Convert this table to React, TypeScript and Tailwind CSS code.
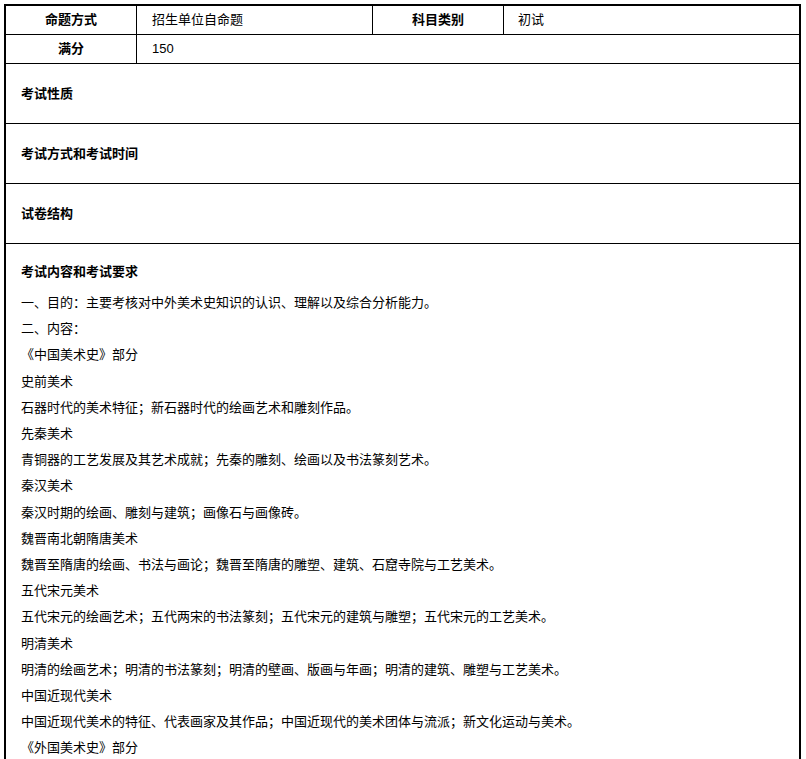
const lines = [
  "一、目的：主要考核对中外美术史知识的认识、理解以及综合分析能力。",
  "二、内容：",
  "《中国美术史》部分",
  "史前美术",
  "石器时代的美术特征；新石器时代的绘画艺术和雕刻作品。",
  "先秦美术",
  "青铜器的工艺发展及其艺术成就；先秦的雕刻、绘画以及书法篆刻艺术。",
  "秦汉美术",
  "秦汉时期的绘画、雕刻与建筑；画像石与画像砖。",
  "魏晋南北朝隋唐美术",
  "魏晋至隋唐的绘画、书法与画论；魏晋至隋唐的雕塑、建筑、石窟寺院与工艺美术。",
  "五代宋元美术",
  "五代宋元的绘画艺术；五代两宋的书法篆刻；五代宋元的建筑与雕塑；五代宋元的工艺美术。",
  "明清美术",
  "明清的绘画艺术；明清的书法篆刻；明清的壁画、版画与年画；明清的建筑、雕塑与工艺美术。",
  "中国近现代美术",
  "中国近现代美术的特征、代表画家及其作品；中国近现代的美术团体与流派；新文化运动与美术。",
  "《外国美术史》部分",
];

const sections = ["考试性质", "考试方式和考试时间", "试卷结构"];

export default function App() {
  return (
    <div className="bg-white p-1 text-[13px] text-black font-['Liberation_Sans','Noto_Sans_CJK_SC',sans-serif]">
      <div className="w-[797px] border-2 border-black">
        {/* top info rows */}
        <div className="flex h-[29px] border-b border-black">
          <div className="w-[131px] border-r border-black flex items-center justify-center font-bold">
            命题方式
          </div>
          <div className="w-[236px] border-r border-black flex items-center px-[15px]">
            招生单位自命题
          </div>
          <div className="w-[131px] border-r border-black flex items-center justify-center font-bold">
            科目类别
          </div>
          <div className="flex-1 flex items-center px-[14px]">初试</div>
        </div>
        <div className="flex h-[29px] border-b border-black">
          <div className="w-[131px] border-r border-black flex items-center justify-center font-bold">
            满分
          </div>
          <div className="flex-1 flex items-center px-[15px]">150</div>
        </div>

        {sections.map((title) => (
          <div
            key={title}
            className="h-[60px] border-b border-black flex items-center px-[15px] font-bold"
          >
            {title}
          </div>
        ))}

        {/* main content */}
        <div className="px-[15px] pt-[15px] pb-8">
          <p className="font-bold leading-[26px] mb-[5px]">考试内容和考试要求</p>
          {lines.map((line, i) => (
            <p key={i} className="leading-[26.2px]">
              {line}
            </p>
          ))}
        </div>
      </div>
    </div>
  );
}
